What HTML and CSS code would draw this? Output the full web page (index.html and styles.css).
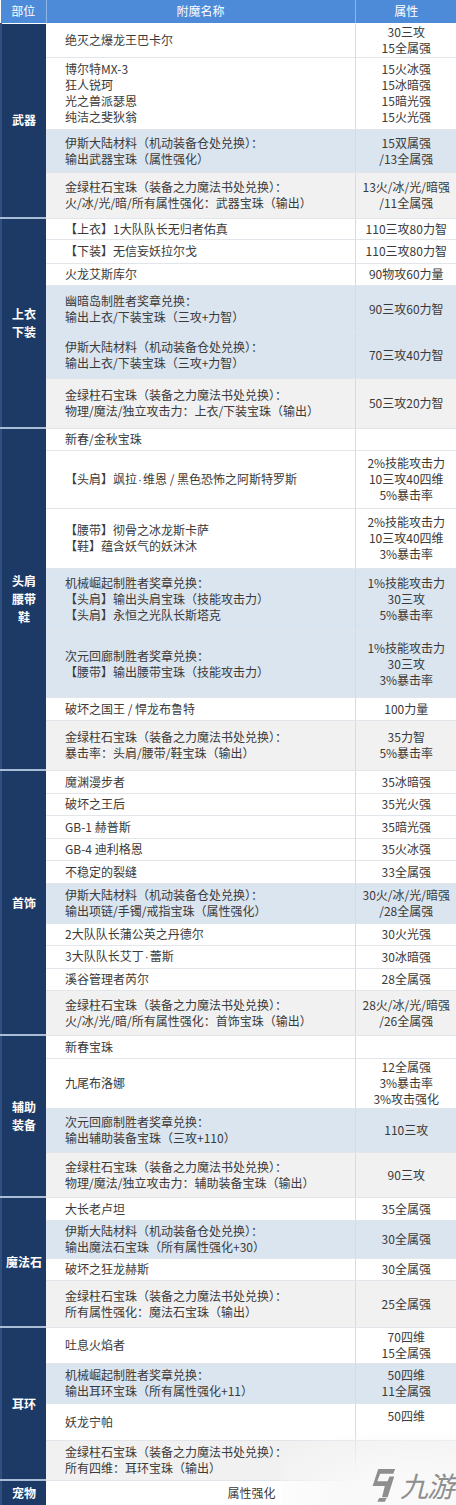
FILE: index.html
```html
<!DOCTYPE html>
<html lang="zh-CN">
<head>
<meta charset="utf-8">
<title>附魔表</title>
<link rel="stylesheet" href="styles.css">
</head>
<body>
<div class="page">
<table class="enchant">
  <colgroup><col class="c-part"><col class="c-name"><col class="c-attr"></colgroup>
  <thead>
    <tr class="head"><th>部位</th><th>附魔名称</th><th>属性</th></tr>
  </thead>
  <tbody>
    <tr class="h34"><td class="part" rowspan="4"><span>武器</span></td><td class="name">绝灭之爆龙王巴卡尔</td><td class="attr">30三攻<br>15全属强</td></tr>
    <tr class="h72"><td class="name">博尔特MX-3<br>狂人锐珂<br>光之兽派瑟恩<br>纯洁之斐狄翁</td><td class="attr">15火冰强<br>15冰暗强<br>15暗光强<br>15火光强</td></tr>
    <tr class="h43 blue"><td class="name">伊斯大陆材料（机动装备仓处兑换）：<br>输出武器宝珠（属性强化）</td><td class="attr">15双属强<br>/13全属强</td></tr>
    <tr class="h46 gray"><td class="name">金绿柱石宝珠（装备之力魔法书处兑换）：<br>火/冰/光/暗/所有属性强化：武器宝珠（输出）</td><td class="attr">13火/冰/光/暗强<br>/11全属强</td></tr>

    <tr class="h21 sect"><td class="part" rowspan="6"><span>上衣<br>下装</span></td><td class="name">【上衣】1大队队长无归者佑真</td><td class="attr">110三攻80力智</td></tr>
    <tr class="h24"><td class="name">【下装】无信妄妖拉尔戈</td><td class="attr">110三攻80力智</td></tr>
    <tr class="h22"><td class="name">火龙艾斯库尔</td><td class="attr">90物攻60力量</td></tr>
    <tr class="h47 blue"><td class="name">幽暗岛制胜者奖章兑换：<br>输出上衣/下装宝珠（三攻+力智）</td><td class="attr">90三攻60力智</td></tr>
    <tr class="h46 blue"><td class="name">伊斯大陆材料（机动装备仓处兑换）：<br>输出上衣/下装宝珠（三攻+力智）</td><td class="attr">70三攻40力智</td></tr>
    <tr class="h50 gray"><td class="name">金绿柱石宝珠（装备之力魔法书处兑换）：<br>物理/魔法/独立攻击力：上衣/下装宝珠（输出）</td><td class="attr">50三攻20力智</td></tr>

    <tr class="h22 sect"><td class="part" rowspan="7"><span>头肩<br>腰带<br>鞋</span></td><td class="name">新春/金秋宝珠</td><td class="attr"></td></tr>
    <tr class="h58"><td class="name">【头肩】飒拉<span class="dot">·</span>维恩 / 黑色恐怖之阿斯特罗斯</td><td class="attr">2%技能攻击力<br>10三攻40四维<br>5%暴击率</td></tr>
    <tr class="h60"><td class="name">【腰带】彻骨之冰龙斯卡萨<br>【鞋】蕴含妖气的妖沐沐</td><td class="attr">2%技能攻击力<br>10三攻40四维<br>3%暴击率</td></tr>
    <tr class="h62 blue"><td class="name">机械崛起制胜者奖章兑换：<br>【头肩】输出头肩宝珠（技能攻击力）<br>【头肩】永恒之光队长斯塔克</td><td class="attr">1%技能攻击力<br>30三攻<br>5%暴击率</td></tr>
    <tr class="h67 blue"><td class="name">次元回廊制胜者奖章兑换：<br>【腰带】输出腰带宝珠（技能攻击力）</td><td class="attr">1%技能攻击力<br>30三攻<br>3%暴击率</td></tr>
    <tr class="h23"><td class="name">破坏之国王 / 悍龙布鲁特</td><td class="attr">100力量</td></tr>
    <tr class="h50 gray"><td class="name">金绿柱石宝珠（装备之力魔法书处兑换）：<br>暴击率：头肩/腰带/鞋宝珠（输出）</td><td class="attr">35力智<br>5%暴击率</td></tr>

    <tr class="h23 sect"><td class="part" rowspan="10"><span>首饰</span></td><td class="name">魔渊漫步者</td><td class="attr">35冰暗强</td></tr>
    <tr class="h22"><td class="name">破坏之王后</td><td class="attr">35光火强</td></tr>
    <tr class="h23"><td class="name">GB-1 赫普斯</td><td class="attr">35暗光强</td></tr>
    <tr class="h22"><td class="name">GB-4 迪利格恩</td><td class="attr">35火冰强</td></tr>
    <tr class="h23"><td class="name">不稳定的裂缝</td><td class="attr">33全属强</td></tr>
    <tr class="h40 blue"><td class="name">伊斯大陆材料（机动装备仓处兑换）：<br>输出项链/手镯/戒指宝珠（属性强化）</td><td class="attr">30火/冰/光/暗强<br>/28全属强</td></tr>
    <tr class="h22"><td class="name">2大队队长蒲公英之丹德尔</td><td class="attr">30火光强</td></tr>
    <tr class="h23"><td class="name">3大队队长艾丁<span class="dot">·</span>蕾斯</td><td class="attr">30冰暗强</td></tr>
    <tr class="h22"><td class="name">溪谷管理者芮尔</td><td class="attr">28全属强</td></tr>
    <tr class="h45 gray"><td class="name">金绿柱石宝珠（装备之力魔法书处兑换）：<br>火/冰/光/暗/所有属性强化：首饰宝珠（输出）</td><td class="attr">28火/冰/光/暗强<br>/26全属强</td></tr>

    <tr class="h23 sect"><td class="part" rowspan="4"><span>辅助<br>装备</span></td><td class="name">新春宝珠</td><td class="attr"></td></tr>
    <tr class="h50"><td class="name">九尾布洛娜</td><td class="attr">12全属强<br>3%暴击率<br>3%攻击强化</td></tr>
    <tr class="h44 blue"><td class="name">次元回廊制胜者奖章兑换：<br>输出辅助装备宝珠（三攻+110）</td><td class="attr">110三攻</td></tr>
    <tr class="h45 gray"><td class="name">金绿柱石宝珠（装备之力魔法书处兑换）：<br>物理/魔法/独立攻击力：辅助装备宝珠（输出）</td><td class="attr">90三攻</td></tr>

    <tr class="h23 sect"><td class="part" rowspan="4"><span>魔法石</span></td><td class="name">大长老卢坦</td><td class="attr">35全属强</td></tr>
    <tr class="h38 blue"><td class="name">伊斯大陆材料（机动装备仓处兑换）：<br>输出魔法石宝珠（所有属性强化+30）</td><td class="attr">30全属强</td></tr>
    <tr class="h22"><td class="name">破坏之狂龙赫斯</td><td class="attr">30全属强</td></tr>
    <tr class="h47 gray"><td class="name">金绿柱石宝珠（装备之力魔法书处兑换）：<br>所有属性强化：魔法石宝珠（输出）</td><td class="attr">25全属强</td></tr>

    <tr class="h36 sect"><td class="part" rowspan="4"><span>耳环</span></td><td class="name">吐息火焰者</td><td class="attr">70四维<br>15全属强</td></tr>
    <tr class="h40 blue"><td class="name">机械崛起制胜者奖章兑换：<br>输出耳环宝珠（所有属性强化+11）</td><td class="attr">50四维<br>11全属强</td></tr>
    <tr class="h37"><td class="name">妖龙宁帕</td><td class="attr attr-top">50四维</td></tr>
    <tr class="h40 gray"><td class="name">金绿柱石宝珠（装备之力魔法书处兑换）：<br>所有四维：耳环宝珠（输出）</td><td class="attr"></td></tr>

    <tr class="h25 sect last"><td class="part"><span>宠物</span></td><td class="pet" colspan="2">属性强化</td></tr>
  </tbody>
</table>

<div class="watermark">
  <svg class="wm-logo" viewBox="0 0 32 40" width="30" height="38" aria-hidden="true">
    <path d="M12 4 H30 L28 9 H14 L11 17 H22 L24 12 H29 L22 34 H16 L19 22 H6 Z" fill="#8e8e8e"/>
    <path d="M13 35 H21 L19 39 H11 Z" fill="#8e8e8e"/>
  </svg>
  <span class="wm-text">九游</span>
</div>
</div>
</body>
</html>
```
FILE: styles.css
```css
* { box-sizing: border-box; }
html, body { margin: 0; padding: 0; background: #ffffff; }
.page {
  position: relative;
  width: 456px;
  height: 1505px;
  overflow: hidden;
  font-family: "Noto Sans CJK SC", "Microsoft YaHei", sans-serif;
  font-size: 12px;
  color: #3a3a3a;
}
.enchant {
  width: 456px;
  border-collapse: collapse;
  table-layout: fixed;
}
.c-part { width: 45px; }
.c-name { width: 309px; }
.c-attr { width: 102px; }

.head th {
  height: 23px;
  background: #4d8bd8;
  color: #ffffff;
  font-weight: normal;
  font-size: 12px;
  line-height: 16px;
  padding: 0;
  border-right: 1px solid #8fb6e6;
  border-bottom: 1px solid #ffffff;
}
.head th:last-child { border-right: none; }

td {
  padding: 0;
  line-height: 16px;
  vertical-align: middle;
  border-bottom: 1px solid #e2e5ea;
}
td.name {
  padding-left: 19px;
  text-align: left;
  white-space: nowrap;
  border-right: 1px solid #d6dbe2;
}
td.attr {
  text-align: center;
  white-space: nowrap;
}
td.attr-top { vertical-align: top; padding-top: 4px; }
.dot { font-family: "Liberation Sans", sans-serif; padding: 0 1px; }

td.part {
  background: #1c3a65;
  color: #ffffff;
  font-weight: bold;
  font-size: 12px;
  text-align: center;
  line-height: 18px;
  border-bottom: 2px solid #a9bdd6;
  border-left: 2px solid #2e4f80;
}
tr.last td { border-bottom: none; }
td.pet {
  text-align: center;
}

tr.blue td:not(.part) { background: #dbe5f0; }
tr.gray td:not(.part) { background: #f1f1f1; }

tr.h21 { height: 21px; }
tr.h22 { height: 22px; }
tr.h23 { height: 23px; }
tr.h24 { height: 24px; }
tr.h25 { height: 25px; }
tr.h34 { height: 34px; }
tr.h36 { height: 36px; }
tr.h37 { height: 37px; }
tr.h38 { height: 38px; }
tr.h40 { height: 40px; }
tr.h43 { height: 43px; }
tr.h44 { height: 44px; }
tr.h45 { height: 45px; }
tr.h46 { height: 46px; }
tr.h47 { height: 47px; }
tr.h50 { height: 50px; }
tr.h58 { height: 58px; }
tr.h60 { height: 60px; }
tr.h62 { height: 62px; }
tr.h67 { height: 67px; }
tr.h72 { height: 72px; }

.watermark {
  position: absolute;
  right: 0;
  bottom: 0;
  width: 175px;
  height: 72px;
  background: radial-gradient(ellipse 100% 100% at 80% 85%, rgba(250,250,250,1) 0%, rgba(248,248,248,0.95) 45%, rgba(255,255,255,0) 100%);
  display: flex;
  align-items: flex-end;
  justify-content: flex-end;
  padding: 0 2px 1px 0;
  gap: 3px;
}
.wm-logo { flex: none; margin-bottom: 1px; }
.wm-text {
  font-size: 28px;
  font-weight: normal;
  font-style: italic;
  color: #8e8e8e;
  line-height: 38px;
  letter-spacing: -1px;
}
```
